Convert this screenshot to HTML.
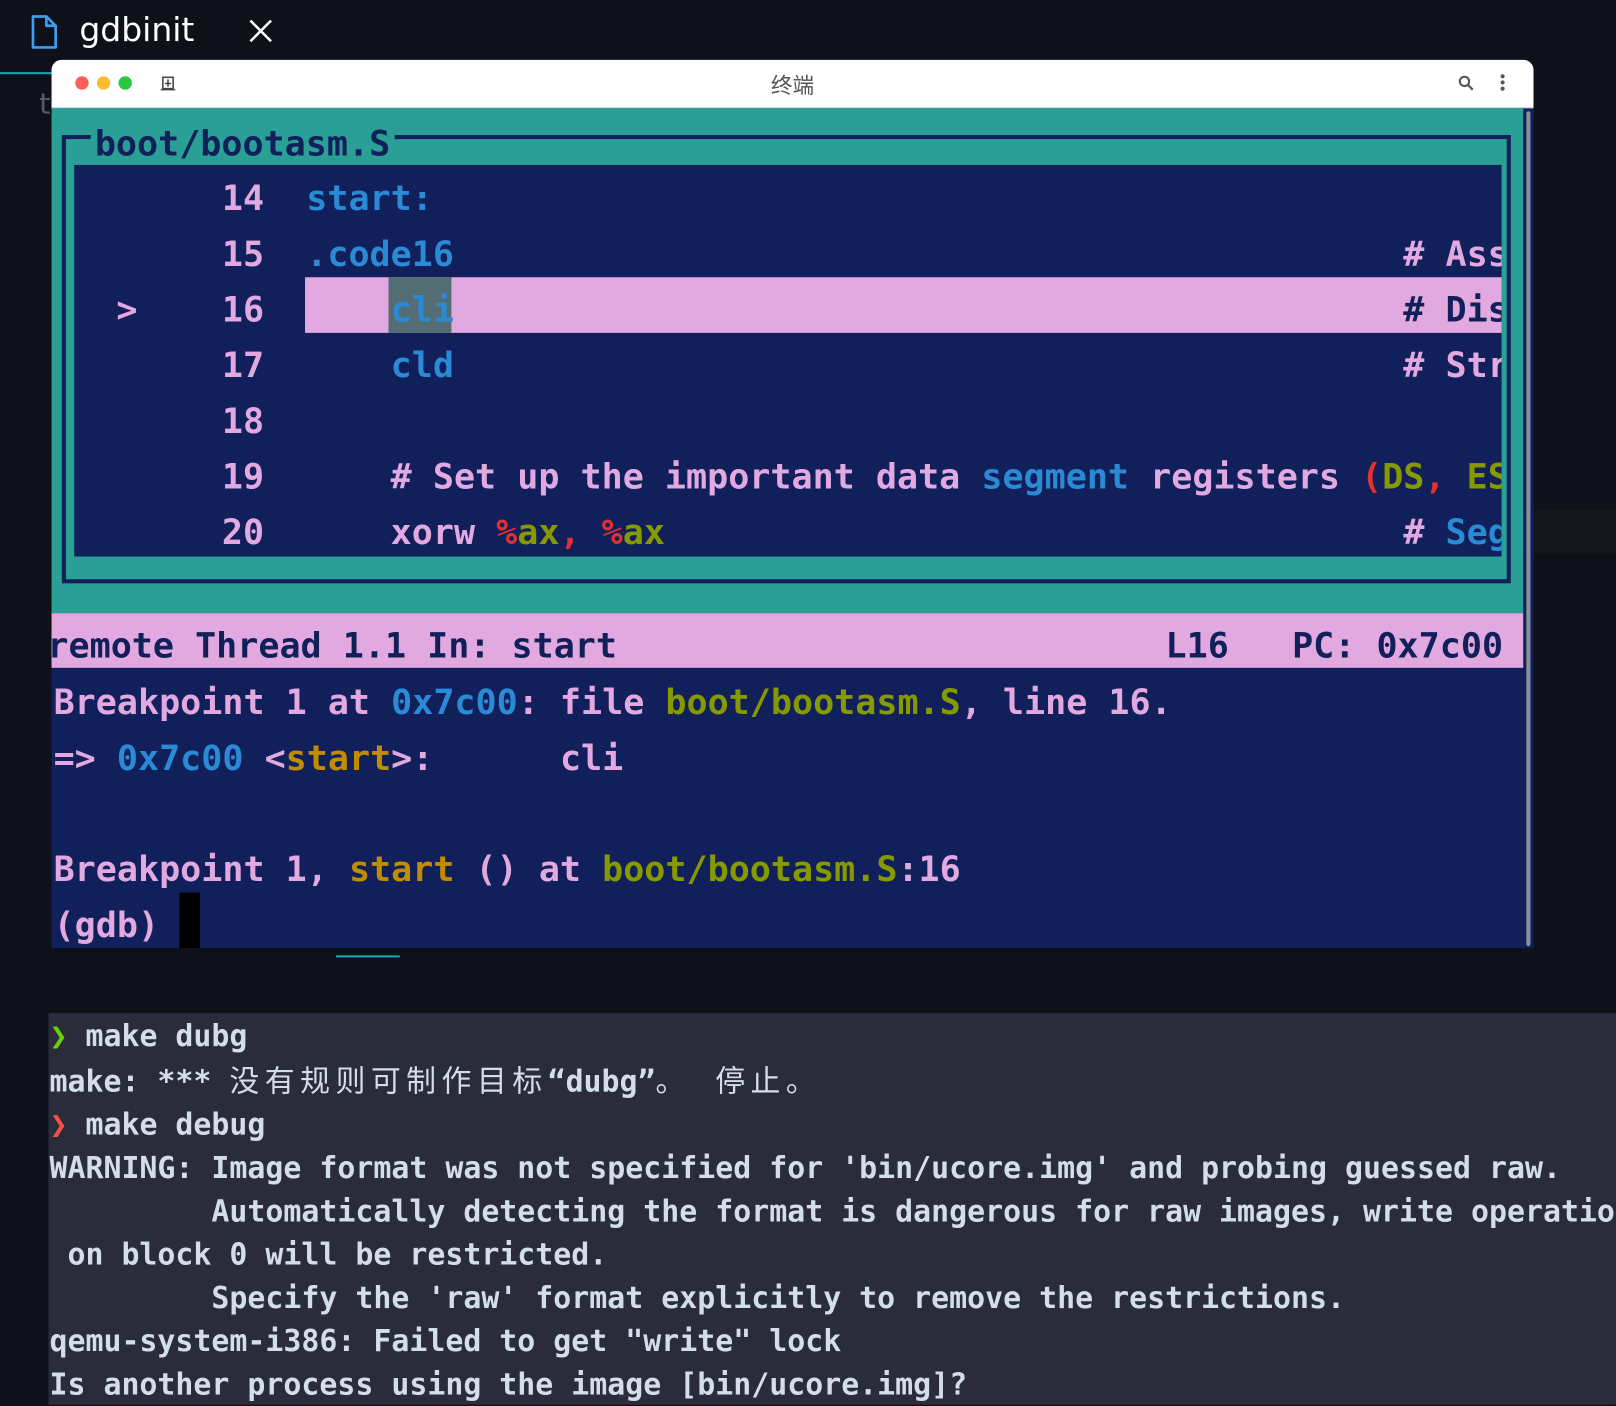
<!DOCTYPE html>
<html><head><meta charset="utf-8"><style>
html,body{margin:0;padding:0;background:#0f111a;width:1616px;height:1398px;overflow:hidden}
#w{position:absolute;left:0;top:0;width:1568px;height:1357px;transform:scale(1.0306);transform-origin:0 0}
.a{position:absolute}
.m{font-family:"DejaVu Sans Mono","Liberation Mono",monospace;font-weight:bold;white-space:pre;font-size:34px;line-height:54px}
.t{font-family:"DejaVu Sans Mono","Liberation Mono","Noto Sans CJK SC",monospace;font-weight:bold;white-space:pre;font-size:29px;line-height:42px;color:#d3deea}
.c{font-weight:normal;font-family:'Noto Sans CJK SC',sans-serif;letter-spacing:5.3px}
.p{color:#e2a9e0}.b{color:#2a8ad6}.g{color:#869a00}.y{color:#c08c00}.r{color:#e03030}.n{color:#12205a}
</style></head><body><div id="w">
<svg class="a" style="left:28px;top:14px" width="30" height="34" viewBox="0 0 30 34"><path d="M4 2h13l9 9v21H4z M17 2v9h9" fill="none" stroke="#3c9ef0" stroke-width="2.6" stroke-linejoin="round"/></svg>
<div class="a" style="left:77px;top:10px;font:32px 'DejaVu Sans','Liberation Sans',sans-serif;color:#fff">gdbinit</div>
<svg class="a" style="left:241px;top:18px" width="24" height="24"><path d="M2 2L22 22M22 2L2 22" stroke="#fff" stroke-width="2.5"/></svg>
<div class="a" style="left:0;top:70px;width:52px;height:2px;background:#1aa3b8"></div>
<div class="a" style="left:38px;top:84px;font:28px 'DejaVu Sans',sans-serif;color:#555a66">t</div>
<div class="a" style="left:1488px;top:495px;width:80px;height:42px;background:#15171f"></div>
<div class="a" style="left:50px;top:58px;width:1438px;height:862px;background:#11205a;border-radius:10px 10px 0 0;overflow:hidden">
 <div class="a" style="left:0;top:0;width:1438px;height:46px;background:#fff;border-bottom:1px solid #ccd"></div>
 <div class="a" style="left:23px;top:16px;width:13px;height:13px;border-radius:50%;background:#fe5f57"></div>
 <div class="a" style="left:44px;top:16px;width:13px;height:13px;border-radius:50%;background:#febc2e"></div>
 <div class="a" style="left:65px;top:16px;width:13px;height:13px;border-radius:50%;background:#28c840"></div>
 <svg class="a" style="left:105px;top:15px" width="16" height="16"><rect x="3" y="2" width="10" height="11" fill="none" stroke="#444" stroke-width="1.5"/><path d="M8 4v7M5 8h6M1 14h14" stroke="#444" stroke-width="1.5"/></svg>
 <div class="a" style="left:0;top:9px;width:1438px;text-align:center;font:21px 'Noto Sans CJK SC',sans-serif;color:#555">终端</div>
 <svg class="a" style="left:1364px;top:14px" width="18" height="18"><circle cx="7" cy="7" r="4.5" fill="none" stroke="#555" stroke-width="2"/><path d="M10 10l5 5" stroke="#555" stroke-width="2.2"/></svg>
 <div class="a" style="left:1406px;top:14px;width:4px;height:4px;border-radius:50%;background:#555;box-shadow:0 6px 0 #555,0 12px 0 #555"></div>
 <div class="a" style="left:0;top:47px;width:1428px;height:490px;background:#2a9f96"></div>
 <div class="a" style="left:1431px;top:50px;width:4px;height:810px;background:#8a8f9a;border-radius:2px"></div>
 <div class="a" style="left:10px;top:73px;width:1398px;height:427px;border:4px solid #12205a"></div>
 <div class="a m n" style="left:38px;top:55px;background:#2a9f96;padding:0 4px">boot/bootasm.S</div>
 <div class="a" style="left:22px;top:102px;width:1385px;height:380px;background:#11205a"></div>
 <div class="a" style="left:246px;top:211px;width:1161px;height:54px;background:#e2a9e0"></div>
 <div class="a" style="left:327px;top:211px;width:61px;height:54px;background:#546c74"></div>
 <div class="a m" style="left:22px;top:108px;width:1385px;overflow:hidden"><span class="p">       14  </span><span class="b">start:</span>
<span class="p">       15  </span><span class="b">.code16</span>                                             <span class="p"># Ass</span>
<span class="p">  &gt;    16  </span>    <span class="b">cli</span>                                             <span class="n"># Dis</span>
<span class="p">       17  </span>    <span class="b">cld</span>                                             <span class="p"># Str</span>
<span class="p">       18</span>
<span class="p">       19  </span>    <span class="p"># Set up the important data </span><span class="b">segment</span><span class="p"> registers </span><span class="r">(</span><span class="g">DS</span><span class="r">,</span> <span class="g">ES</span>
<span class="p">       20  </span>    <span class="p">xorw </span><span class="r">%</span><span class="g">ax</span><span class="r">, %</span><span class="g">ax</span>                                   <span class="p"># </span><span class="b">Seg</span></div>
 <div class="a" style="left:0;top:537px;width:1428px;height:53px;background:#e2a9e0"></div>
 <div class="a m n" style="left:-4px;top:542px">remote Thread 1.1 In: start                          L16   PC: 0x7c00</div>
 <div class="a m p" style="left:2px;top:597px">Breakpoint 1 at <span class="b">0x7c00</span>: file <span class="g">boot/bootasm.S</span>, line 16.
=&gt; <span class="b">0x7c00</span> &lt;<span class="y">start</span>&gt;:      cli

Breakpoint 1, <span class="y">start</span> () at <span class="g">boot/bootasm.S</span>:16
(gdb) </div>
 <div class="a" style="left:124px;top:808px;width:20px;height:54px;background:#000"></div>
</div>
<div class="a" style="left:326px;top:927px;width:62px;height:2px;background:#1aa3b8"></div>
<div class="a" style="left:47px;top:983px;width:1521px;height:380px;background:#2a2b3b"></div>
<div class="a t" style="left:48px;top:984px"><span style="color:#66d20a">❯</span> make dubg
make: *** <span class="c">没有规则可制作目标</span>“dubg”<span class="c">。  停止。</span>
<span style="color:#f0524a">❯</span> make debug
WARNING: Image format was not specified for 'bin/ucore.img' and probing guessed raw.
         Automatically detecting the format is dangerous for raw images, write operations
 on block 0 will be restricted.
         Specify the 'raw' format explicitly to remove the restrictions.
qemu-system-i386: Failed to get "write" lock
Is another process using the image [bin/ucore.img]?</div>
</div></body></html>
